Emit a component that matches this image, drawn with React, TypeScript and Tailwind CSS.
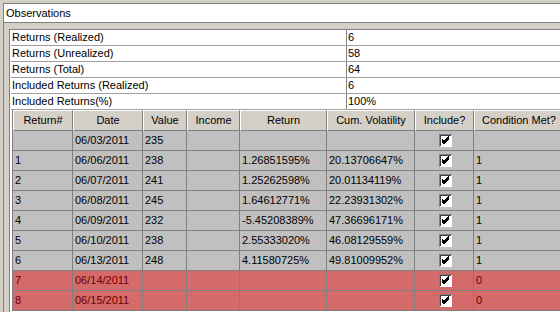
import React from 'react';

type Row = {
  n: string;
  date: string;
  value: string;
  income: string;
  ret: string;
  vol: string;
  met: string;
  bad?: boolean;
};

const summary = [
  ['Returns (Realized)', '6'],
  ['Returns (Unrealized)', '58'],
  ['Returns (Total)', '64'],
  ['Included Returns (Realized)', '6'],
  ['Included Returns(%)', '100%'],
];

const rows: Row[] = [
  { n: '', date: '06/03/2011', value: '235', income: '', ret: '', vol: '', met: '' },
  { n: '1', date: '06/06/2011', value: '238', income: '', ret: '1.26851595%', vol: '20.13706647%', met: '1' },
  { n: '2', date: '06/07/2011', value: '241', income: '', ret: '1.25262598%', vol: '20.01134119%', met: '1' },
  { n: '3', date: '06/08/2011', value: '245', income: '', ret: '1.64612771%', vol: '22.23931302%', met: '1' },
  { n: '4', date: '06/09/2011', value: '232', income: '', ret: '-5.45208389%', vol: '47.36696171%', met: '1' },
  { n: '5', date: '06/10/2011', value: '238', income: '', ret: '2.55333020%', vol: '46.08129559%', met: '1' },
  { n: '6', date: '06/13/2011', value: '248', income: '', ret: '4.11580725%', vol: '49.81009952%', met: '1' },
  { n: '7', date: '06/14/2011', value: '', income: '', ret: '', vol: '', met: '0', bad: true },
  { n: '8', date: '06/15/2011', value: '', income: '', ret: '', vol: '', met: '0', bad: true },
];

const headers = [
  { label: 'Return#', w: 'w-[60px]' },
  { label: 'Date', w: 'w-[70px]' },
  { label: 'Value', w: 'w-[44px]' },
  { label: 'Income', w: 'w-[53px]' },
  { label: 'Return', w: 'w-[87px]' },
  { label: 'Cum. Volatility', w: 'w-[88px]' },
  { label: 'Include?', w: 'w-[59px]' },
  { label: 'Condition Met?', w: 'w-[90px]' },
];

const CheckBox = () => (
  <svg width="13" height="13" viewBox="0 0 13 13" shapeRendering="crispEdges">
    <rect x="0" y="0" width="13" height="13" fill="#ffffff" />
    <path d="M0 0.5H12.5M0.5 0V13" stroke="#808080" />
    <path d="M1 1.5H11.5M1.5 1V12" stroke="#404040" />
    <path d="M3 5.5l2 2 5-5" stroke="#000" strokeWidth="1" fill="none" />
    <path d="M3 6.5l2 2 5-5" stroke="#000" strokeWidth="1" fill="none" />
    <path d="M3 7.5l2 2 5-5" stroke="#000" strokeWidth="1" fill="none" />
  </svg>
);

const App: React.FC = () => {
  const cell = 'h-[20px] shrink-0 border-r border-b border-[#808080] pl-[2px] flex items-center whitespace-nowrap overflow-hidden';

  return (
    <div
      className="w-[560px] h-[312px] overflow-hidden bg-[#d4d0c8] pl-[3px] pt-[3px] text-[11px] text-black"
      style={{ fontFamily: '"Liberation Sans", Arial, sans-serif' }}
    >
      <div className="h-full border-l border-t border-[#808080] bg-white flex flex-col">
        {/* Title */}
        <div className="h-[19px] shrink-0 border-b border-[#808080] flex items-center pl-[2px]">
          Observations
        </div>

        <div className="flex-1 bg-[#d4d0c8] pt-[6px] pl-[5px]">
          <div className="h-full border-l border-t border-[#808080] bg-white pl-[1px]">
            {/* Summary */}
            {summary.map(([k, v]) => (
              <div key={k} className="h-[16px] flex border-b border-[#a0a0a0]">
                <div className="w-[336px] shrink-0 border-r border-[#808080] pl-[1px] flex items-center">{k}</div>
                <div className="pl-[1px] flex items-center">{v}</div>
              </div>
            ))}

            {/* Grid */}
            <div className="ml-[1px] border-l border-[#808080] bg-[#d4d0c8]">
              <div className="flex">
                {headers.map((h) => (
                  <div
                    key={h.label}
                    className={`${h.w} h-[21px] shrink-0 bg-[#d4d0c8] border-t border-l border-white border-r border-b border-r-[#808080] border-b-[#808080] flex items-center justify-center whitespace-nowrap`}
                  >
                    {h.label}
                  </div>
                ))}
              </div>
              {rows.map((r, i) => (
                <div
                  key={i}
                  className={`flex ${r.bad ? 'bg-[#d46a6a] text-[#6e0000]' : 'bg-[#c0c0c0]'}`}
                >
                  <div className={`${cell} w-[60px]`}>{r.n}</div>
                  <div className={`${cell} w-[70px]`}>{r.date}</div>
                  <div className={`${cell} w-[44px]`}>{r.value}</div>
                  <div className={`${cell} w-[53px]`}>{r.income}</div>
                  <div className={`${cell} w-[87px]`}>{r.ret}</div>
                  <div className={`${cell} w-[88px]`}>{r.vol}</div>
                  <div className={`${cell} w-[59px] justify-center pl-0`}>
                    <CheckBox />
                  </div>
                  <div className={`${cell} w-[90px]`}>{r.met}</div>
                </div>
              ))}
            </div>
          </div>
        </div>
      </div>
    </div>
  );
};

export default App;
